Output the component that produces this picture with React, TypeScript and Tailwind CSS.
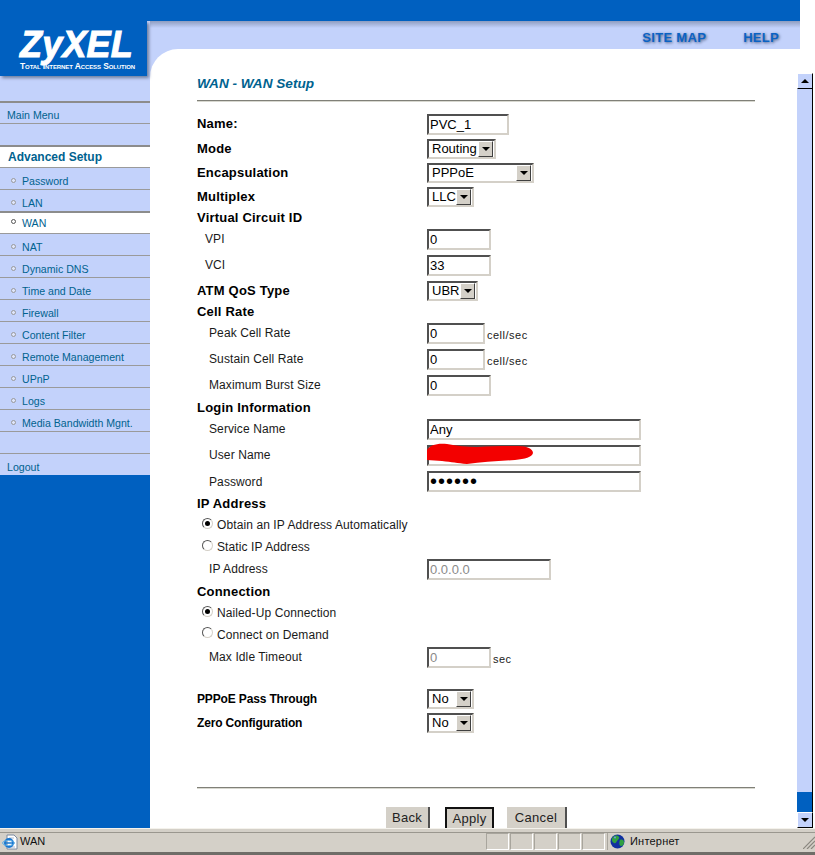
import type { ReactNode } from 'react';

const navItems = ['Password', 'LAN', 'WAN', 'NAT', 'Dynamic DNS', 'Time and Date', 'Firewall', 'Content Filter', 'Remote Management', 'UPnP', 'Logs', 'Media Bandwidth Mgnt.'];

const inset = 'border-2 border-t-[#505050] border-l-[#505050] border-r-[#d4d0c8] border-b-[#d4d0c8]';

function NavRow({ label }: { label: string }) {
  const active = label === 'WAN';
  return (
    <div className={`flex h-[22px] items-center pl-[11px] text-[10.6px] text-[#00628f] ${active ? 'border-t-2 border-[#8c8c8c] bg-white pt-[1px]' : 'border-t border-[#9a9a9a] pt-[7px]'}`}>
      <span className={`mr-[6px] h-[5px] w-[5px] -translate-y-[2px] rounded-full border ${active ? 'border-[#555] bg-white' : 'border-[#999] bg-[#dfe6fb]'}`} />
      {label}
    </div>
  );
}

function PlainRow({ children, thick }: { children?: ReactNode; thick?: boolean }) {
  return (
    <div className={`flex h-[22px] items-center pl-[7px] pt-[6px] text-[10.6px] text-[#00628f] ${thick ? 'border-t-2 border-[#8c8c8c]' : 'border-t border-[#9a9a9a]'}`}>
      {children}
    </div>
  );
}

function Sidebar() {
  return (
    <aside className="flex h-[807px] w-[150px] shrink-0 flex-col bg-[#0060c0]">
      <div className="bg-[#c3d2fb] pb-[25px]">
        <div className="relative z-10 h-[55px] w-[147px] bg-[#0060c0] pl-[20px] pt-[9px] text-white shadow-[2px_2px_3px_#6f7f9f]">
          <div className="text-[36px] font-bold italic leading-[30px] tracking-[0.2px] [-webkit-text-stroke:1px_white]">ZyXEL</div>
          <div className="mt-[2px] whitespace-nowrap text-[8.5px] font-bold leading-[9px] tracking-[-0.1px] [font-variant-caps:small-caps]">Total Internet Access Solution</div>
        </div>
      </div>
      <div className="bg-[#c3d2fb]">
        <PlainRow thick>Main Menu</PlainRow>
        <PlainRow />
        <div className="flex h-[22px] items-center border-t-2 border-[#8c8c8c] bg-white pl-[8px] text-[12px] font-bold text-[#00628f]">Advanced Setup</div>
        {navItems.map((item) => <NavRow key={item} label={item} />)}
        <PlainRow />
        <PlainRow>Logout</PlainRow>
      </div>
    </aside>
  );
}

function Row({ h, label, bold, small, indent, children, className }: { h: string; label?: string; bold?: boolean; small?: boolean; indent?: string; children?: ReactNode; className?: string }) {
  const labelStyle = small
    ? 'text-[12px] font-bold tracking-[-0.15px]'
    : bold
      ? 'text-[13px] font-bold tracking-[0.2px]'
      : 'text-[12px] tracking-[0.1px] text-[#1a1a1a]';
  return (
    <div className={`flex items-center ${h} ${className ?? ''}`}>
      <div className={`w-[230px] shrink-0 ${labelStyle} ${indent ?? ''}`}>{label}</div>
      {children}
    </div>
  );
}

function TextInput({ w, value, disabled }: { w: string; value: string; disabled?: boolean }) {
  return (
    <input
      readOnly
      type="text"
      value={value}
      className={`h-[21px] ${w} ${inset} bg-white pl-px text-[13px] outline-none ${disabled ? 'text-[#8a8a8a]' : 'text-black'}`}
    />
  );
}

function Select({ w, value }: { w: string; value: string }) {
  return (
    <div className={`flex h-[20px] items-center justify-between ${w} ${inset} bg-white pl-[3px] pr-px text-[13px]`}>
      <span>{value}</span>
      <span className="flex h-[16px] w-[15px] items-center justify-center border border-b-[#404040] border-l-white border-r-[#404040] border-t-white bg-[#d4d0c8]">
        <span className="h-0 w-0 border-x-[4px] border-t-[4px] border-x-transparent border-t-black" />
      </span>
    </div>
  );
}

function Radio({ h, label, checked }: { h: string; label: string; checked?: boolean }) {
  return (
    <div className={`flex items-center pl-[5px] text-[12px] tracking-[0.1px] text-[#1a1a1a] ${h}`}>
      <span className="mr-[4px] flex h-[11px] w-[11px] -translate-y-[2px] items-center justify-center rounded-full border border-b-[#d4d0c8] border-l-[#555] border-r-[#d4d0c8] border-t-[#555] bg-white">
        {checked && <span className="h-[5px] w-[5px] rounded-full bg-black" />}
      </span>
      {label}
    </div>
  );
}

function Unit({ children }: { children: ReactNode }) {
  return <span className="ml-[2px] mt-[5px] text-[11px] tracking-[0.5px] text-[#1a1a1a]">{children}</span>;
}

function Btn({ w, label, primary }: { w: string; label: string; primary?: boolean }) {
  return (
    <button className={`block h-[26px] ${w} bg-[#d4d0c8] text-[13px] tracking-[0.3px] text-[#222] ${primary ? 'border-2 border-[#111] pb-[6px]' : 'border-r-2 border-[#505050] pb-[4px]'}`}>
      {label}
    </button>
  );
}

function WanForm() {
  return (
    <div className="w-[558px] pt-[26px]">
      <h1 className="h-[17px] text-[13.6px] font-bold italic leading-[17px] text-[#00628f]">WAN - WAN Setup</h1>
      <div className="mb-[9px] mt-[8px] h-[2px] border-b border-t border-b-[#d8d8d0] border-t-[#808078]" />
      <Row h="h-[26px]" label="Name:" bold><TextInput w="w-[82px]" value="PVC_1" /></Row>
      <Row h="h-[24px]" label="Mode" bold><Select w="w-[69px]" value="Routing" /></Row>
      <Row h="h-[24px]" label="Encapsulation" bold><Select w="w-[107px]" value="PPPoE" /></Row>
      <Row h="h-[24px]" label="Multiplex" bold><Select w="w-[47px]" value="LLC" /></Row>
      <Row h="h-[18px]" label="Virtual Circuit ID" bold />
      <Row h="h-[24px]" label="VPI" indent="pl-[8px]"><TextInput w="w-[64px]" value="0" /></Row>
      <Row h="h-[28px]" label="VCI" indent="pl-[8px]"><TextInput w="w-[64px]" value="33" /></Row>
      <Row h="h-[24px]" label="ATM QoS Type" bold><Select w="w-[51px]" value="UBR" /></Row>
      <Row h="h-[17px]" label="Cell Rate" bold />
      <Row h="h-[26px]" label="Peak Cell Rate" indent="pl-[12px]"><TextInput w="w-[58px]" value="0" /><Unit>cell/sec</Unit></Row>
      <Row h="h-[26px]" label="Sustain Cell Rate" indent="pl-[12px]"><TextInput w="w-[58px]" value="0" /><Unit>cell/sec</Unit></Row>
      <Row h="h-[26px]" label="Maximum Burst Size" indent="pl-[12px]"><TextInput w="w-[64px]" value="0" /></Row>
      <Row h="h-[19px]" label="Login Information" bold />
      <Row h="h-[24px]" label="Service Name" indent="pl-[12px]"><TextInput w="w-[214px]" value="Any" /></Row>
      <Row h="h-[28px]" label="User Name" indent="pl-[12px]">
        <div className="relative">
          <TextInput w="w-[214px]" value="" />
          <svg className="absolute left-0 top-0" width="108" height="21" viewBox="0 0 108 21">
            <path d="M0 7 C3 2 10 0 20 1 C30 3 40 4 50 4 C65 3 80 3 92 3 C100 3 106 6 106 10 C105 14 98 16 88 17 C70 18 55 19 40 21 C30 20 25 19 15 18 L0 17 Z" fill="#f30000" />
          </svg>
        </div>
      </Row>
      <Row h="h-[25px]" label="Password" indent="pl-[12px]">
        <input readOnly type="password" value="secret" className={`h-[21px] w-[214px] ${inset} bg-white pl-px text-[20px] leading-none tracking-[1px] text-black outline-none`} />
      </Row>
      <Row h="h-[20px]" label="IP Address" bold />
      <Radio h="h-[22px]" label="Obtain an IP Address Automatically" checked />
      <Radio h="h-[22px]" label="Static IP Address" />
      <Row h="h-[22px]" label="IP Address" indent="pl-[12px]"><TextInput w="w-[124px]" value="0.0.0.0" disabled /></Row>
      <Row h="h-[23px]" label="Connection" bold />
      <Radio h="h-[20px]" label="Nailed-Up Connection" checked />
      <Radio h="h-[23px]" label="Connect on Demand" />
      <Row h="h-[22px]" label="Max Idle Timeout" indent="pl-[12px]"><TextInput w="w-[64px]" value="0" disabled /><Unit>sec</Unit></Row>
      <Row h="h-[24px]" label="PPPoE Pass Through" small className="mt-[19px]"><Select w="w-[47px]" value="No" /></Row>
      <Row h="h-[24px]" label="Zero Configuration" small><Select w="w-[47px]" value="No" /></Row>
      <div className="mt-[52px] h-[2px] border-b border-t border-b-[#d8d8d0] border-t-[#808078]" />
      <div className="ml-[189px] mt-[18px] flex gap-[13px]">
        <Btn w="w-[44px]" label="Back" />
        <div className="ml-[2px]"><Btn w="w-[49px]" label="Apply" primary /></div>
        <Btn w="w-[60px]" label="Cancel" />
      </div>
    </div>
  );
}

function Scrollbar() {
  const btn = 'flex h-[16px] w-[16px] items-center justify-center border border-b-black border-l-white border-r-black border-t-white bg-[#c3d2fb]';
  return (
    <div className="flex h-[779px] w-[16px] shrink-0 flex-col bg-white pt-[24px]">
      <div className={btn}><span className="h-0 w-0 border-x-[4px] border-b-[4px] border-x-transparent border-b-black" /></div>
      <div className="flex-1 border-r border-black bg-[#c3d2fb]" />
      <div className="h-[20px] border-r border-black bg-[#0060c0]" />
      <div className={btn}><span className="h-0 w-0 border-x-[4px] border-t-[4px] border-x-transparent border-t-black" /></div>
    </div>
  );
}

function IeIcon() {
  return (
    <svg width="16" height="16" viewBox="0 0 16 16">
      <path d="M5 1h7l3 3v11H5z" fill="#fff" stroke="#7a8aa0" />
      <path d="M7 4h5M7 13h6" stroke="#b0b8c8" />
      <circle cx="7" cy="9" r="4" fill="none" stroke="#1a78d0" strokeWidth="2" />
      <path d="M3 9h8" stroke="#1a78d0" strokeWidth="1.5" />
      <ellipse cx="6.5" cy="9" rx="6" ry="2.5" fill="none" stroke="#60b0e8" />
    </svg>
  );
}

function GlobeIcon() {
  return (
    <svg width="15" height="15" viewBox="0 0 15 15">
      <circle cx="7.5" cy="7.5" r="7" fill="#1030a0" />
      <path d="M3 3c2-2 5-2 6 0 1 1-1 3-2 4s-1 3-3 2-3-4-1-6zM10 6c2-1 4 0 4 2s-1 4-3 4-2-4-1-6z" fill="#30a040" />
      <circle cx="5" cy="3.5" r="1" fill="#7090f0" />
    </svg>
  );
}

function StatusBar() {
  const cell = 'h-[17px] w-[23px] border border-b-white border-l-[#a8a59d] border-r-white border-t-[#a8a59d]';
  return (
    <footer className="h-[27px] border-t border-[#f4f2ec] bg-[#d4d0c8] text-[11px] text-[#111]">
      <div className="mt-[3px] flex h-[18px] items-center gap-px border-t border-[#9a978f]">
        <div className="flex h-[17px] w-[485px] items-center gap-[2px] pl-[2px]">
          <IeIcon />WAN
        </div>
        <span className={cell} />
        <span className={cell} />
        <span className={cell} />
        <span className={cell} />
        <span className={cell} />
        <div className="ml-px flex h-[17px] flex-1 items-center gap-[5px] border-l border-[#a8a59d] pl-[2px] tracking-[0.2px]">
          <GlobeIcon />Интернет
          <svg className="ml-auto" width="12" height="14" viewBox="0 0 12 14">
            <path d="M12 2 0 14M12 6 4 14M12 10 8 14" stroke="#8a877f" strokeWidth="1.2" />
          </svg>
        </div>
      </div>
      <div className="mt-[2px] h-[3px] bg-[#6f6d68]" />
    </footer>
  );
}

export default function App() {
  return (
    <div className="flex h-[855px] w-[815px] flex-col overflow-hidden bg-white font-['Liberation_Sans',Arial,sans-serif]">
      <div className="h-[21px] w-[800px] shrink-0 bg-[#0060c0]" />
      <div className="flex h-[807px] shrink-0 overflow-hidden">
        <Sidebar />
        <main className="flex flex-col">
          <div className="flex h-[28px] w-[650px] shrink-0 justify-end gap-[37px] bg-[linear-gradient(#8f9dc0,#c3d2fb_25%)] pr-[21px] pt-[10px] text-[13px] font-bold leading-[14px] tracking-[0.3px] text-[#0a62c4] [text-shadow:1px_1px_3px_#4a5a80]">
            <span>SITE MAP</span>
            <span>HELP</span>
          </div>
          <div className="flex">
            <div className="h-[779px] w-[647px] overflow-hidden bg-[#c3d2fb]">
              <div className="h-full rounded-tl-[28px] bg-white pl-[47px]">
                <WanForm />
              </div>
            </div>
            <Scrollbar />
          </div>
        </main>
      </div>
      <StatusBar />
    </div>
  );
}
